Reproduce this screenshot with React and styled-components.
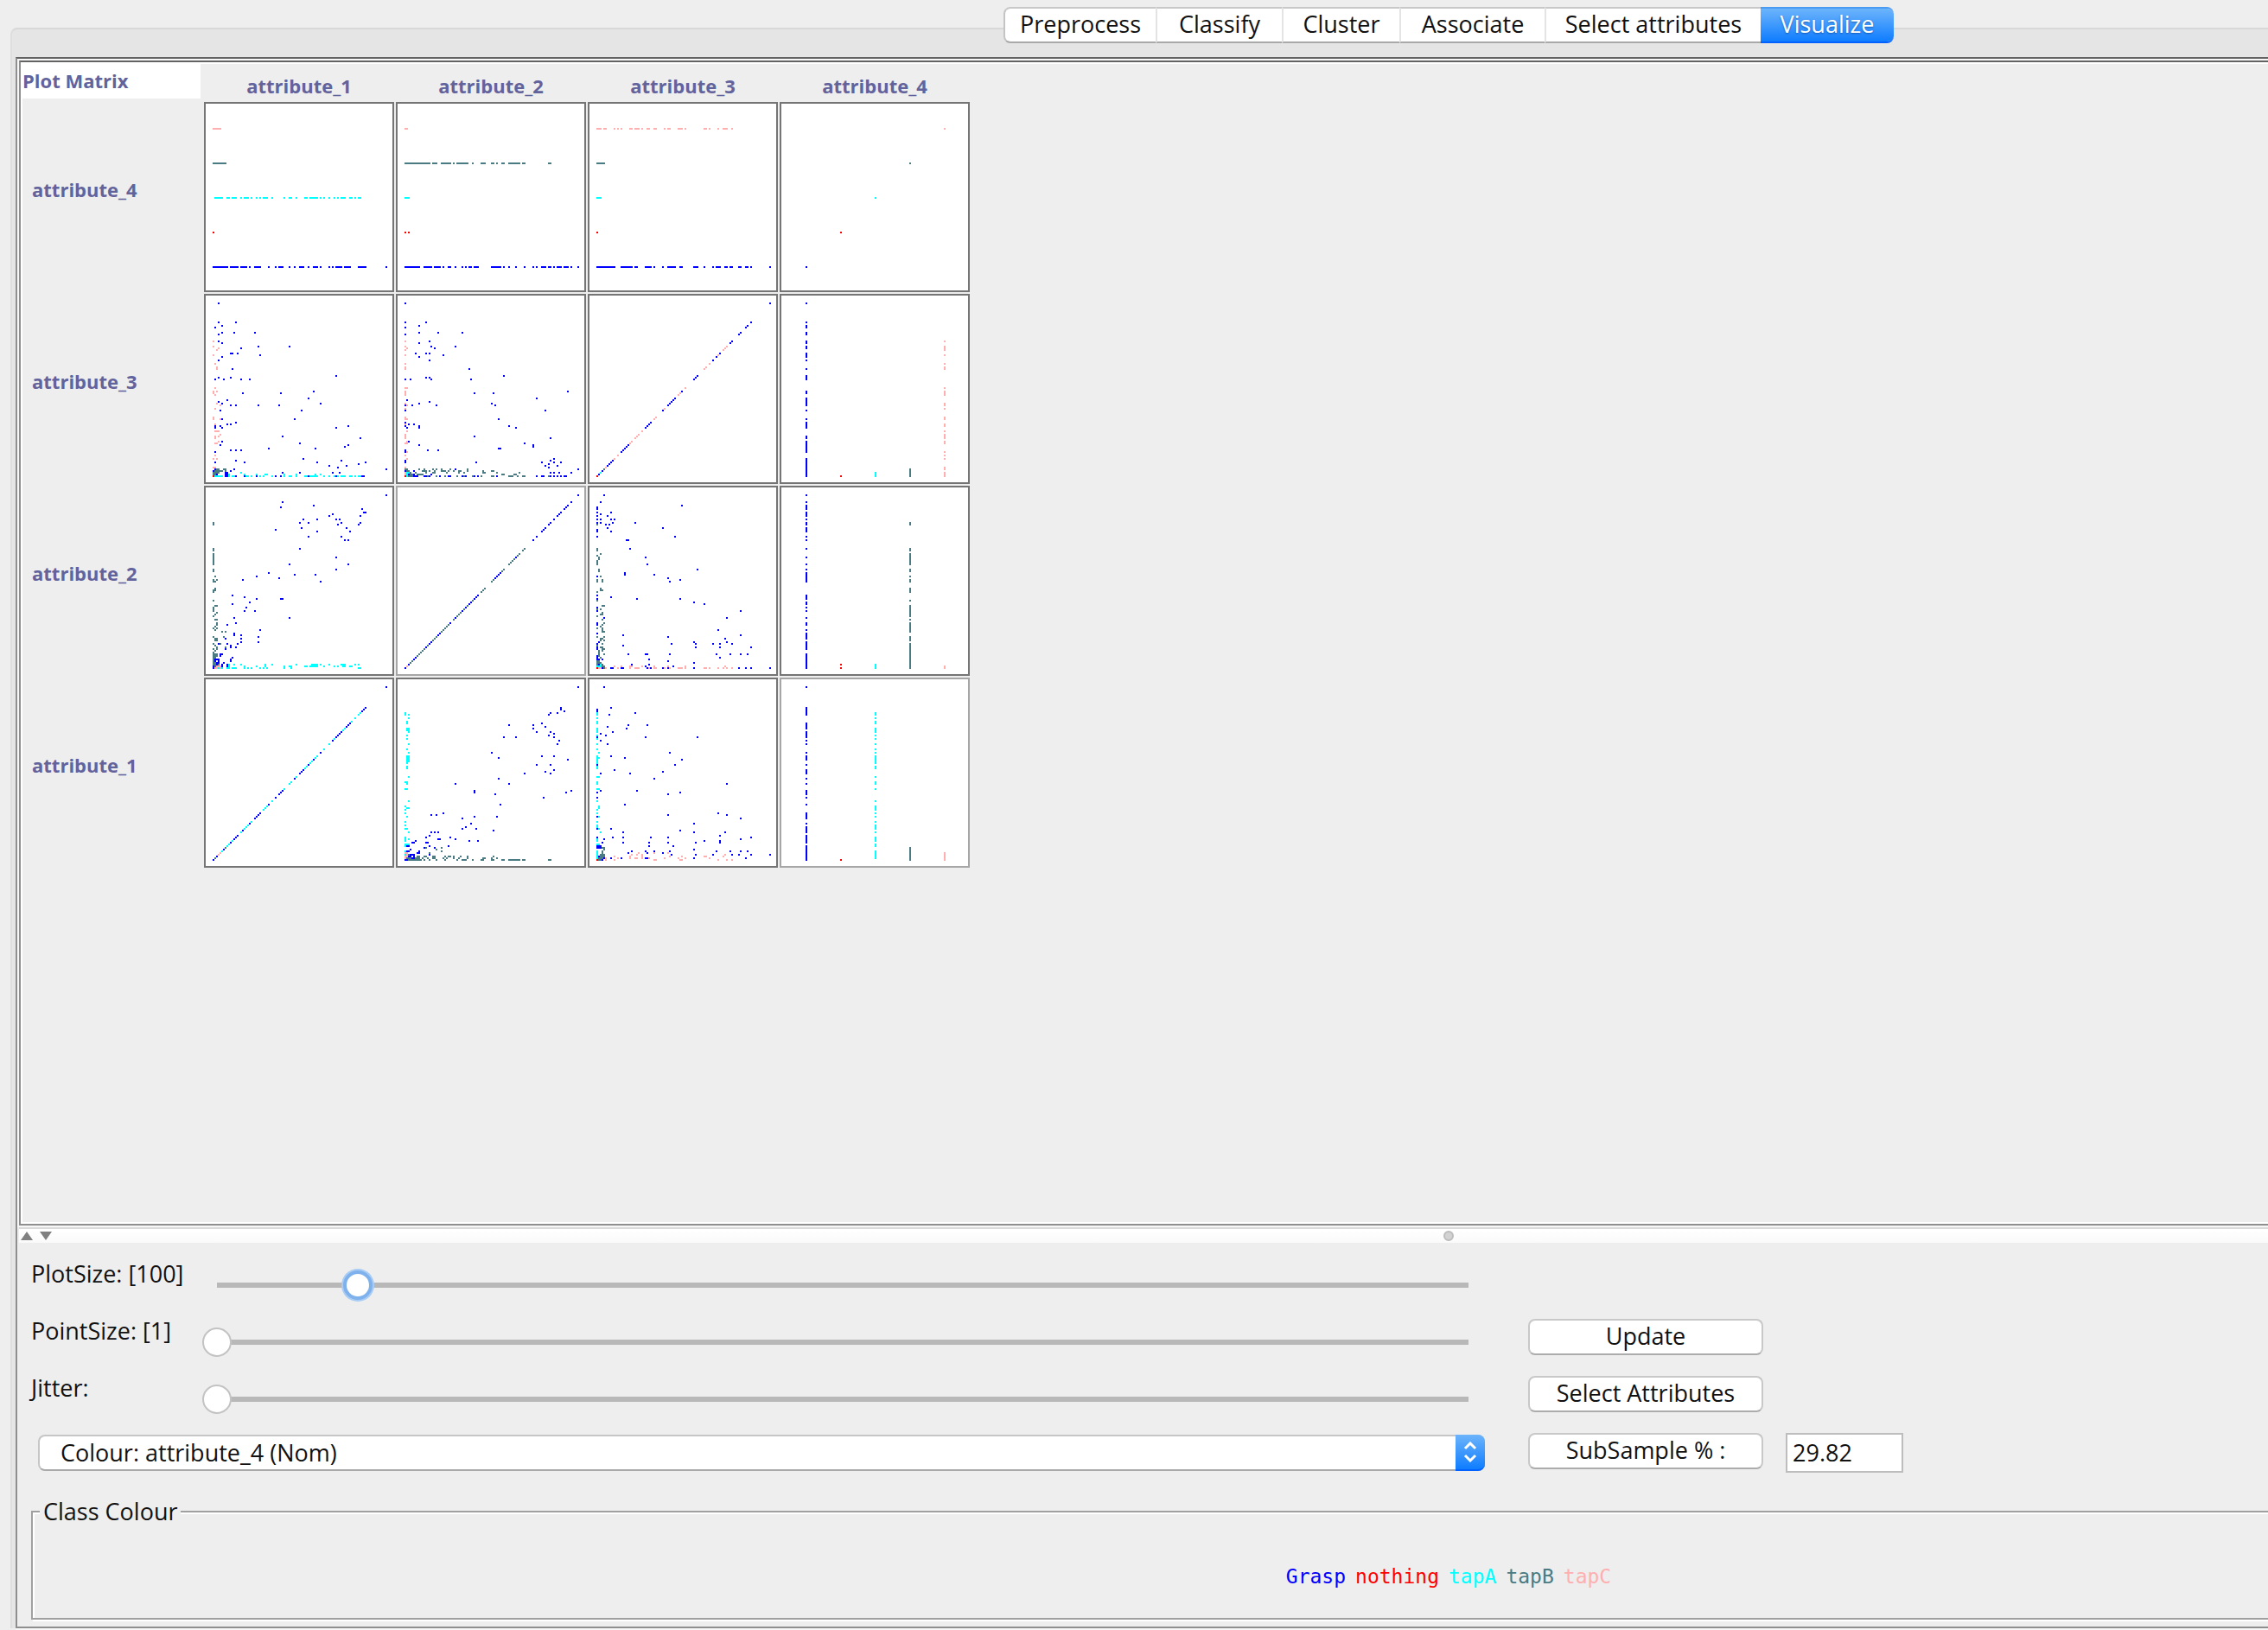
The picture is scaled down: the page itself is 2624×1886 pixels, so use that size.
import React, { useState } from "react";
import styled, { createGlobalStyle, css } from "styled-components";

const UI_FONT = '"Open Sans", "Noto Sans", sans-serif';
const MONO_FONT = '"DejaVu Sans Mono", monospace';

const GlobalStyle = createGlobalStyle`
  *, *::before, *::after { box-sizing: border-box; }
  html, body { margin: 0; background: #eeeeee; }
  body, button, input, select {
    font-family: ${UI_FONT};
    font-size: 27px;
    color: #111111;
  }
`;

/* ---------- data ---------- */

const CLASSES = [
  { name: "Grasp", color: "#0000ff" },
  { name: "nothing", color: "#ff0000" },
  { name: "tapA", color: "#00ffff" },
  { name: "tapB", color: "#4b7b82" },
  { name: "tapC", color: "#ffafaf" },
];

/* Observed values of each numeric attribute, one list per class, as ranges. */
const VALUES = {
  1: [
    "0-8 10-14 16-19 21 24-27 32 36 38-40 44 47 50-52 55 58-60 62 67 69 71-74 76-79 84-88 100",
    "0",
    "1-5 8 9 11-13 16 18-20 22 25 27 29-31 34 41 44 45 48 53 54 56-60 62 64 67 70 72 74-76 79 80 82 84 85",
    "0-7",
    "0-4",
  ],
  2: [
    "0-8 11-15 17-20 22 25 26 29 33 35 37 38 40-42 50-55 57 60 64 69 74 76 79-81 83 84 86 88-90 92-94 96 100",
    "0 2",
    "0-2",
    "0-14 16-18 21-26 28 30-36 39 44-46 50 51 53 56 57 60-66 68 69 83 84",
    "0 1",
  ],
  3: [
    "0-10 14-20 22 23 28-31 33 38 41-45 48 49 56-58 62 67 69-71 74 75 77 78 82 83 86 87 89 100",
    "0",
    "0-2",
    "0-4",
    "0-2 4 5 10 12 14 19 20 22-24 26 29 30 33 34 39 41 42 47-49 51 62 63 65 70 73-75 78",
  ],
};

/* Colour of each value on the diagonal plots, where classes overlap. */
const DIAGONAL = {
  1: [
    "0 2 6 10 12-14 17 21 24-27 32 36 38-40 47 50-52 55 58 62 69 71-74 77-79 86-88 100",
    "",
    "5 8 9 11 16 18-20 22 29-31 34 41 44 45 48 53 54 56 57 59 60 64 67 70 75 76 80 82 84 85",
    "1 7",
    "3 4",
  ],
  2: [
    "0 2 5 6 12 14 15 19 20 26 29 33 35 37 38 40-42 52-55 64 74 76 79-81 83 84 86 88-90 92-94 96 100",
    "",
    "",
    "3 4 7-11 13 16-18 21-25 28 30-32 34 36 39 44-46 50 51 56 57 60-63 65 66 68 69",
    "1",
  ],
  3: [
    "1 3 6-9 14-18 28-31 38 41-45 49 56-58 67 69 71 77 78 82 83 86 87 89 100",
    "0",
    "2",
    "4",
    "5 10 12 19 20 22-24 26 33 34 39 47 48 51 62 63 65 70 73-75",
  ],
};

/* Scatter of two numeric attributes, "x,y" pairs, one list per class. */
const PAIRS = {
  "1:3": [
    "3,100 3,89 13,89 5,87 1,86 5,83 12,83 24,83 3,82 3,78 5,77 16,74 26,75 44,75 10,71 11,71 14,71 27,70 5,69 3,67 11,62 71,58 3,57 10,57 1,56 6,56 16,56 21,56 58,49 17,48 39,48 55,45 8,44 3,43 5,42 62,42 10,41 13,41 26,41 38,41 4,38 51,38 5,33 47,33 13,31 8,30 10,30 1,29 1,28 4,29 5,28 71,28 78,29 40,23 85,22 5,20 4,18 50,19 78,18 76,17 32,16 59,16 10,15 13,15 16,15 1,14 52,10 13,9 74,9 1,8 18,8 60,8 88,8 84,7 67,6 77,6 72,5 12,4 100,4 0,3 40,2 50,2 69,2 73,2 7,2 8,2 8,1 7,1 10,3 2,1 1,4 87,0 86,0 71,0 55,0 39,0 36,0 25,0 18,0 13,0 7,0 8,0",
    "0,0",
    "85,0 84,0 82,0 80,0 79,0 76,0 75,0 74,0 72,0 70,0 67,0 64,0 60,0 59,0 58,0 57,0 56,0 54,0 53,0 48,0 45,0 44,0 41,0 34,0 29,0 27,0 22,0 20,0 19,0 12,0 11,0 9,0 5,0 4,0 3,0 2,0 1,0 62,1 59,1 48,1 41,1 31,1 30,1 25,1 18,1 16,2 9,1",
    "2,4 3,4 6,4 7,4 1,3 2,3 3,3 4,3 5,3 7,3 0,2 1,2 2,2 3,2 0,1 1,1",
    "0,78 0,75 3,74 2,73 0,70 1,65 2,63 2,62 1,51 2,49 0,49 0,48 1,47 2,42 4,41 1,39 0,34 0,33 4,33 1,30 1,26 2,26 3,26 4,24 3,23 1,23 1,22 3,20 1,19 2,19 1,12 0,10 2,10 0,5 1,5",
  ],
  "2:3": [
    "0,100 0,89 12,89 8,87 0,86 8,83 19,83 33,83 0,82 14,78 8,77 15,75 17,74 29,75 6,71 12,71 14,71 8,69 22,70 14,67 37,62 57,58 12,57 14,57 15,56 0,56 3,56 38,56 94,49 40,48 51,48 76,45 1,44 14,43 8,42 50,42 52,41 0,41 4,41 18,41 0,38 81,38 54,33 0,31 2,30 5,30 0,29 1,28 8,29 8,28 60,29 64,28 40,23 84,22 2,20 69,19 8,18 74,18 74,17 54,16 55,16 0,15 0,14 13,15 19,15 84,9 86,10 0,9 0,8 41,8 79,8 86,8 90,8 81,6 83,7 83,5 88,6 29,4 100,4 84,2 86,2 89,2 96,2 15,1 5,3 5,1 2,1 0,3 93,0 92,0 90,0 88,0 86,0 84,0 80,0 79,0 76,0 53,0 42,0 40,0 35,0 33,0 26,0 25,0 20,0 14,0 12,0 11,0 7,0 6,0 5,0",
    "0,0",
    "1,0 1,1 1,2 2,2",
    "83,0 69,0 68,0 65,0 62,0 61,0 60,0 51,0 50,0 44,0 39,0 34,0 30,0 23,0 18,0 13,0 4,0 3,0 2,0 64,1 63,1 57,1 56,1 8,1 9,1 7,1 3,1 4,1 66,2 53,2 46,2 45,2 34,2 31,2 24,2 17,2 16,2 12,2 3,2 6,2 10,1 51,3 50,3 45,3 36,3 32,3 31,3 28,3 25,3 23,3 22,3 21,3 17,3 14,3 12,3 11,3 10,3 2,3 1,3 36,4 26,4 21,4 18,4 16,4 11,4 8,4 1,4 0,4",
    "0,78 0,75 1,74 0,73 0,70 0,65 0,63 0,62 0,51 1,51 0,49 0,48 0,47 0,42 1,41 0,39 0,34 0,33 1,33 0,30 1,26 0,24 0,23 0,22 1,20 0,19 1,19 1,14 0,12 1,10 0,5 0,1 0,2",
  ],
  "1:2": [
    "100,100 40,96 39,93 58,94 86,92 87,90 88,90 85,88 69,89 67,88 52,86 60,86 71,86 73,86 50,84 55,84 74,84 72,83 85,84 84,83 51,81 77,81 36,80 60,79 79,79 55,76 74,76 76,74 78,74 50,69 71,64 44,60 78,60 71,57 32,55 47,54 59,54 25,53 38,52 17,51 62,50 11,42 18,41 25,40 39,40 40,40 21,38 11,37 19,35 18,33 24,33 12,29 44,29 13,26 8,25 27,22 12,20 12,19 16,19 16,17 26,18 7,17 16,15 26,15 3,14 8,14 14,14 10,13 10,12 13,12 7,11 4,8 5,8 4,7 11,6 10,5 10,4 1,5 2,5 3,5 1,4 3,4 2,3 2,2 3,3 6,3 5,2 8,2 5,1 8,1 0,1 0,0",
    "",
    "85,0 84,0 45,0 41,0 31,0 29,0 27,0 22,0 20,0 18,0 13,0 12,0 11,0 9,0 8,0 5,0 3,0 80,1 79,1 76,1 75,1 72,1 70,1 64,1 60,1 59,1 58,1 57,1 56,1 54,1 53,1 45,1 44,1 41,1 30,1 25,1 18,1 9,1 84,2 82,2 76,2 75,2 74,2 67,2 62,2 60,2 59,2 58,2 57,2 48,2 34,2 30,2 16,2 12,2 9,2",
    "0,84 0,83 0,69 0,68 0,66 0,65 0,64 0,63 0,62 0,61 0,60 0,57 0,56 1,53 0,51 2,51 0,50 1,50 1,46 0,45 1,45 0,44 0,39 1,36 2,36 0,35 0,34 0,33 2,32 1,31 0,30 1,28 2,28 2,26 2,25 1,24 0,23 2,23 1,22 5,21 7,21 0,18 6,18 1,17 2,17 1,16 2,16 0,14 4,14 1,13 2,12 7,12 0,11 2,11 1,10 0,9 0,8 1,8 2,8 0,7 1,7 2,7 0,6 1,6 0,5 0,4 0,3 1,3 0,2 1,2 3,2 1,1",
    "2,1 3,1 4,1 1,0 2,0 4,0",
  ],
};

const CLASS_POSITIONS = [10, 30, 50, 70, 90];

const expand = (text) =>
  text
    .split(" ")
    .filter(Boolean)
    .flatMap((part) => {
      const [from, to = from] = part.split("-").map(Number);
      return Array.from({ length: to - from + 1 }, (_, i) => from + i);
    });

const parsePairs = (text) =>
  text
    .split(" ")
    .filter(Boolean)
    .map((p) => p.split(",").map(Number));

const flip = (points) => points.map(([x, y]) => [y, x]);

function pointsFor(col, row, cls) {
  if (col === 4 && row === 4) return [[CLASS_POSITIONS[cls], CLASS_POSITIONS[cls]]];
  if (col === 4) return expand(VALUES[row][cls]).map((v) => [CLASS_POSITIONS[cls], v]);
  if (row === 4) return expand(VALUES[col][cls]).map((v) => [v, CLASS_POSITIONS[cls]]);
  if (col === row) return expand(DIAGONAL[col][cls]).map((v) => [v, v]);
  return col < row
    ? parsePairs(PAIRS[`${col}:${row}`][cls])
    : flip(parsePairs(PAIRS[`${row}:${col}`][cls]));
}

const toPath = (points) => points.map(([x, y]) => `M${5 + x} ${105 - y}h1v1h-1z`).join("");

/* ---------- window and tabs ---------- */

const Desktop = styled.div`
  height: 100vh;
  overflow: hidden;
`;

const Window = styled.div`
  display: flex;
  flex-direction: column;
  width: calc(100% + 728px);
  height: 100%;
  padding: 8px 12px 2px;
`;

const TabBar = styled.nav`
  position: relative;
  z-index: 1;
  align-self: center;
  display: grid;
  grid-template-columns: 176px 146px 136px 168px 250px 154px;
  height: 42px;
  flex: none;
`;

const Tab = styled.button`
  padding: 0 0 2px;
  border: solid;
  border-width: 2px 0;
  border-color: #c8c8c8 transparent #a9a9a9;
  background: #ffffff;
  line-height: 36px;
  white-space: nowrap;
  & + & { border-left: 2px solid #e4e4e4; }
  &:first-child { border-radius: 8px 0 0 8px; border-left: 2px solid #c4c4c4; }
  &:last-child { border-radius: 0 8px 8px 0; }
  ${(p) =>
    p.$active &&
    css`
      && {
        color: #ffffff;
        text-shadow: 0 1px 2px rgba(0, 40, 110, 0.5);
        background: linear-gradient(#6cb4fb, #0f7dff);
        border: solid;
        border-width: 2px 0;
        border-color: #4a9cf3 transparent #0362ff;
        background-clip: padding-box;
      }
    `}
`;

const TabPanel = styled.main`
  flex: 1;
  min-height: 0;
  display: flex;
  margin-top: -18px;
  padding: 32px 4px 0;
  border: 2px solid #d8d8d8;
  border-left-color: #dedede;
  border-bottom: 0;
  border-radius: 8px 8px 0 0;
  background: #e5e5e5;
`;

const Split = styled.div`
  flex: 1;
  display: flex;
  flex-direction: column;
  min-width: 0;
  border: 2px solid #8f8f8f;
  border-top-color: #636363;
  background: #eeeeee;
  box-shadow: 0 2px 0 #f7f7f7;
`;

/* ---------- plot matrix ---------- */

const MatrixPane = styled.section`
  flex: 1;
  min-height: 0;
  overflow: hidden;
  margin: 2px;
  padding: 2px;
  border: 2px solid #8f8f8f;
  border-top-color: #636363;
  box-shadow: inset 0 0 0 2px #ffffff, 0 0 0 2px #f7f7f7;
`;

const Matrix = styled.div`
  display: grid;
  grid-template-columns: 208px repeat(4, 220px);
  grid-template-rows: 42px repeat(4, 220px);
  gap: 2px;
  color: #62639c;
  font-size: 22px;
  font-weight: 700;
  line-height: 28px;
`;

const Corner = styled.h1`
  margin: 0;
  width: 206px;
  height: 40px;
  background: #ffffff;
  font: inherit;
  line-height: 38px;
`;

const ColumnLabel = styled.div`
  display: flex;
  align-items: center;
  justify-content: center;
  padding-top: 8px;
`;

const RowLabel = styled.div`
  display: flex;
  align-items: center;
  padding: 0 0 18px 11px;
`;

const Plot = styled.svg`
  display: block;
  width: 220px;
  height: 220px;
  border: 2px solid ${(p) => (p.$light ? "#a6a6a6" : "#757575")};
  background: #ffffff;
`;

function ScatterPlot({ col, row }) {
  const light = (col === 2 && row === 2) || (col === 4 && row === 1);
  return (
    <Plot
      $light={light}
      viewBox="1 1 108 108"
      shapeRendering="crispEdges"
      role="img"
      aria-label={`attribute_${col} by attribute_${row}`}
    >
      {[4, 3, 2, 0, 1].map((cls) => (
        <path key={cls} fill={CLASSES[cls].color} d={toPath(pointsFor(col, row, cls))} />
      ))}
    </Plot>
  );
}

/* ---------- divider ---------- */

const Divider = styled.div`
  flex: none;
  display: grid;
  grid-template-columns: 1fr auto 1fr;
  align-items: center;
  height: 18px;
  margin: 0 2px;
  padding: 0 2px;
  border-top: 2px solid #dadada;
  background: linear-gradient(#ffffff, #fafafa);
`;

const Arrows = styled.svg`
  display: block;
  width: 36px;
  height: 12px;
  fill: #808080;
`;

const Grip = styled.span`
  width: 12px;
  height: 12px;
  border: 2px solid #bcbcbc;
  border-radius: 50%;
  background: #d2d2d2;
`;

/* ---------- controls ---------- */

const Controls = styled.section`
  flex: none;
  display: grid;
  grid-template-columns: calc(50% + 42px) auto;
  column-gap: 50px;
  padding: 16px 16px;
`;

const Settings = styled.div`
  display: flex;
  flex-direction: column;
`;

const SliderRow = styled.div`
  display: flex;
  height: 66px;
`;

const SliderLabel = styled.label`
  width: 198px;
  line-height: 40px;
  white-space: nowrap;
`;

const knob = css`
  width: 34px;
  height: 34px;
  border-radius: 50%;
  background: #ffffff;
  border: ${(p) => (p.$focused ? "4px solid #7fb2ec" : "2px solid #c3c3c3")};
  box-shadow: ${(p) => (p.$focused ? "0 0 0 2px #a9cdf5" : "none")};
`;

const Slider = styled.input`
  flex: 1;
  min-width: 0;
  height: 66px;
  margin: 0 2px 0 0;
  appearance: none;
  outline: none;
  background: linear-gradient(#b8b8b8, #b8b8b8) center / calc(100% - 34px) 6px no-repeat;
  &::-webkit-slider-thumb {
    appearance: none;
    ${knob}
  }
`;

const ComboBox = styled.div`
  position: relative;
  height: 42px;
  margin: 8px 0 0 8px;
`;

const Select = styled.select`
  appearance: none;
  display: block;
  width: 100%;
  height: 42px;
  padding: 0 40px 2px 24px;
  border: 2px solid #c6c6c6;
  border-bottom-color: #a9a9a9;
  border-radius: 8px;
  background: #ffffff;
`;

const Stepper = styled.span`
  position: absolute;
  top: 0;
  right: 0;
  display: flex;
  align-items: center;
  justify-content: center;
  width: 34px;
  height: 42px;
  border-radius: 0 8px 8px 0;
  border-bottom: 2px solid #0362ff;
  background: linear-gradient(#6cb4fb, #0f7dff);
  pointer-events: none;
`;

const Actions = styled.div`
  display: flex;
  flex-direction: column;
  gap: 24px;
  padding-top: 72px;
`;

const ActionRow = styled.div`
  display: flex;
  gap: 26px;
  height: 42px;
`;

const Button = styled.button`
  width: 272px;
  height: 42px;
  padding: 0 0 2px;
  border: 2px solid #c8c8c8;
  border-bottom-color: #acacac;
  border-radius: 8px;
  background: #ffffff;
  line-height: 36px;
`;

const Field = styled.input`
  width: 136px;
  height: 46px;
  padding: 0 6px 2px;
  border: 2px solid #bdbdbd;
  border-radius: 0;
  background: #ffffff;
`;

/* ---------- class colours ---------- */

const ClassColours = styled.fieldset`
  flex: none;
  margin: 13px 16px 8px;
  padding: 0 8px;
  border: 2px solid #a0a0a0;
  box-shadow: inset 2px 2px 0 #ffffff, 2px 2px 0 #ffffff;
`;

const Legend = styled.legend`
  padding: 0 4px;
  background: #eeeeee;
  line-height: 36px;
`;

const ClassList = styled.div`
  display: flex;
  justify-content: center;
  gap: 11px;
  padding: 42px 0 33px;
  font-family: ${MONO_FONT};
  font-size: 23px;
  line-height: 30px;
`;

const ClassName = styled.span`
  color: ${(p) => p.$color};
`;

const TABS = ["Preprocess", "Classify", "Cluster", "Associate", "Select attributes", "Visualize"];

export default function App() {
  const [tab, setTab] = useState("Visualize");
  const [plotSize, setPlotSize] = useState(100);
  const [pointSize, setPointSize] = useState(1);
  const [jitter, setJitter] = useState(0);

  return (
    <Desktop>
      <GlobalStyle />
      <Window>
        <TabBar>
          {TABS.map((name) => (
            <Tab key={name} type="button" $active={name === tab} onClick={() => setTab(name)}>
              {name}
            </Tab>
          ))}
        </TabBar>
        <TabPanel>
          <Split>
            <MatrixPane>
              <Matrix>
                <Corner>Plot Matrix</Corner>
                {[1, 2, 3, 4].map((n) => (
                  <ColumnLabel key={n}>{`attribute_${n}`}</ColumnLabel>
                ))}
                {[4, 3, 2, 1].map((row) => (
                  <React.Fragment key={row}>
                    <RowLabel>{`attribute_${row}`}</RowLabel>
                    {[1, 2, 3, 4].map((col) => (
                      <ScatterPlot key={col} col={col} row={row} />
                    ))}
                  </React.Fragment>
                ))}
              </Matrix>
            </MatrixPane>
            <Divider>
              <Arrows viewBox="0 0 36 12" aria-hidden="true">
                <path d="M0 11L7 1l7 10zM22 1h14l-7 10z" />
              </Arrows>
              <Grip />
            </Divider>
            <Controls>
              <Settings>
                <SliderRow>
                  <SliderLabel htmlFor="plot-size">{`PlotSize: [${plotSize}]`}</SliderLabel>
                  <Slider
                    id="plot-size"
                    type="range"
                    min="50"
                    max="495"
                    $focused
                    value={plotSize}
                    onChange={(e) => setPlotSize(e.target.value)}
                  />
                </SliderRow>
                <SliderRow>
                  <SliderLabel htmlFor="point-size">{`PointSize: [${pointSize}]`}</SliderLabel>
                  <Slider
                    id="point-size"
                    type="range"
                    min="1"
                    max="10"
                    value={pointSize}
                    onChange={(e) => setPointSize(e.target.value)}
                  />
                </SliderRow>
                <SliderRow>
                  <SliderLabel htmlFor="jitter">Jitter:</SliderLabel>
                  <Slider
                    id="jitter"
                    type="range"
                    min="0"
                    max="50"
                    value={jitter}
                    onChange={(e) => setJitter(e.target.value)}
                  />
                </SliderRow>
                <ComboBox>
                  <Select aria-label="Colour" defaultValue="4">
                    <option value="4">Colour: attribute_4 (Nom)</option>
                  </Select>
                  <Stepper>
                    <svg width="16" height="24" viewBox="0 0 16 24" fill="none" stroke="#fff" strokeWidth="3">
                      <path d="M2 8l6-6 6 6M2 16l6 6 6-6" />
                    </svg>
                  </Stepper>
                </ComboBox>
              </Settings>
              <Actions>
                <Button type="button">Update</Button>
                <Button type="button">Select Attributes</Button>
                <ActionRow>
                  <Button type="button">SubSample % :</Button>
                  <Field aria-label="SubSample %" defaultValue="29.82" />
                </ActionRow>
              </Actions>
            </Controls>
            <ClassColours>
              <Legend>Class Colour</Legend>
              <ClassList>
                {CLASSES.map((c) => (
                  <ClassName key={c.name} $color={c.color}>
                    {c.name}
                  </ClassName>
                ))}
              </ClassList>
            </ClassColours>
          </Split>
        </TabPanel>
      </Window>
    </Desktop>
  );
}
